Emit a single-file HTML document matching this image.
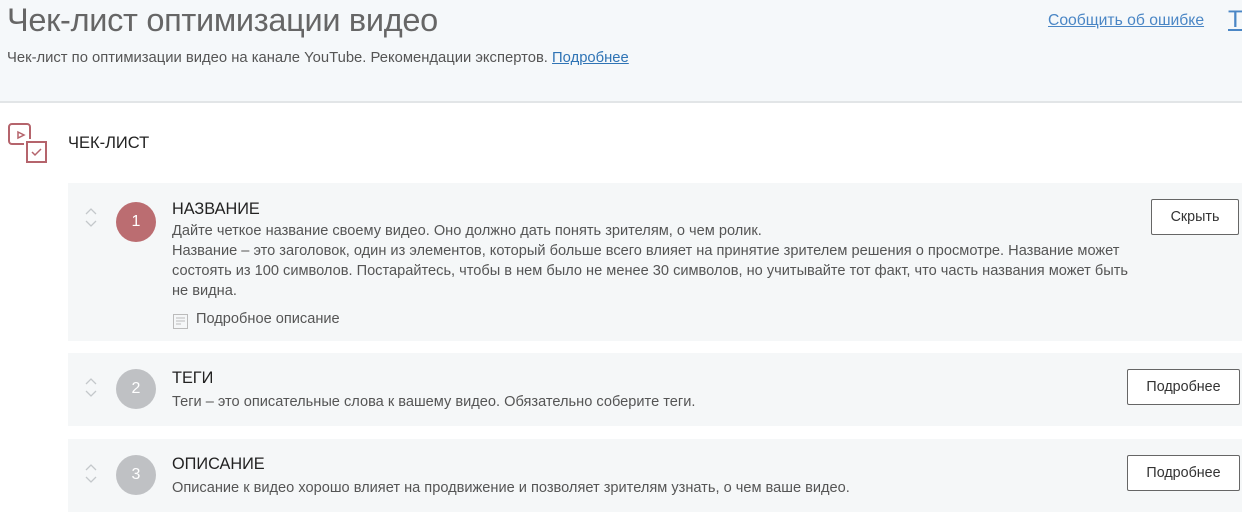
<!DOCTYPE html>
<html><head><meta charset="utf-8"><style>
*{margin:0;padding:0;box-sizing:border-box}
body{width:1242px;height:522px;overflow:hidden;background:#fff;font-family:"Liberation Sans",sans-serif;position:relative;color:#333}
.top{position:absolute;left:0;top:0;width:1242px;height:103px;background:#f5f8fa;border-bottom:2px solid #e2e5e7}
h1{position:absolute;left:7px;top:2px;font-size:32.5px;font-weight:normal;color:#666;letter-spacing:-0.3px}
.sub{position:absolute;left:7px;top:50px;font-size:14.8px;color:#555}
a{color:#2f74b5;text-decoration:underline}
.rep{position:absolute;left:1048px;top:12px;font-size:15.7px;color:#4a86c5}
.T{position:absolute;left:1228px;top:6px;font-size:24px;color:#4a86c5;text-decoration:underline}
.cl{position:absolute;left:68px;top:134px;font-size:16.5px;color:#222}
.card{position:absolute;left:68px;width:1174px;background:#f5f7f8}
.arr{position:absolute;left:16px;width:14px;height:24px}
.num{position:absolute;left:48px;width:40px;height:40px;border-radius:50%;color:#fff;font-size:16px;text-align:center;line-height:40px}
.t{position:absolute;left:104px;font-size:16.3px;color:#222}
.d{position:absolute;left:104px;font-size:14.6px;color:#555;line-height:20px;width:972px}
.btn{position:absolute;height:36px;border:1px solid #666;border-radius:2px;background:#fff;font-size:14.3px;color:#333;text-align:center;line-height:34px}
</style></head><body>
<div class="top">
<h1>Чек-лист оптимизации видео</h1>
<div class="sub">Чек-лист по оптимизации видео на канале YouTube. Рекомендации экспертов. <a>Подробнее</a></div>
<a class="rep">Сообщить об ошибке</a><a class="T">T</a>
</div>
<svg style="position:absolute;left:6px;top:122px" width="44" height="42" viewBox="0 0 44 42" fill="none" stroke="#b5646c" stroke-width="2">
<path d="M18 22H6a3 3 0 0 1-3-3V5a3 3 0 0 1 3-3h15a3 3 0 0 1 3 3v12"/>
<path d="M12 10l6 3-6 3z" stroke-width="1.5"/>
<rect x="21" y="20" width="19" height="20"/>
<path d="M26 30l3 3 6-6" stroke-width="1.5"/>
</svg>
<div class="cl">ЧЕК-ЛИСТ</div>

<div class="card" style="top:183px;height:158px">
<svg class="arr" style="top:23px" viewBox="0 0 14 24" fill="none" stroke="#c4c8cb" stroke-width="1.3"><path d="M2 8l5-5 5 5M2 15l5 5 5-5"/></svg>
<div class="num" style="top:19px;background:#bb6d71">1</div>
<div class="t" style="top:17px">НАЗВАНИЕ</div>
<div class="d" style="top:38px">Дайте четкое название своему видео. Оно должно дать понять зрителям, о чем ролик.<br>Название – это заголовок, один из элементов, который больше всего влияет на принятие зрителем решения о просмотре. Название может состоять из 100 символов. Постарайтесь, чтобы в нем было не менее 30 символов, но учитывайте тот факт, что часть названия может быть не видна.</div>
<svg style="position:absolute;left:105px;top:131px" width="15" height="15" viewBox="0 0 15 15" fill="none" stroke="#bbb"><rect x="0.5" y="0.5" width="14" height="14"/><path d="M3 4h9M3 7h9M3 10h5"/></svg>
<div class="d" style="top:126px;left:128px">Подробное описание</div>
<div class="btn" style="left:1083px;top:16px;width:88px">Скрыть</div>
</div>

<div class="card" style="top:353px;height:73px">
<svg class="arr" style="top:23px" viewBox="0 0 14 24" fill="none" stroke="#c4c8cb" stroke-width="1.3"><path d="M2 8l5-5 5 5M2 15l5 5 5-5"/></svg>
<div class="num" style="top:16px;background:#bfc1c4">2</div>
<div class="t" style="top:16px">ТЕГИ</div>
<div class="d" style="top:39px">Теги – это описательные слова к вашему видео. Обязательно соберите теги.</div>
<div class="btn" style="left:1059px;top:16px;width:113px">Подробнее</div>
</div>

<div class="card" style="top:439px;height:73px">
<svg class="arr" style="top:23px" viewBox="0 0 14 24" fill="none" stroke="#c4c8cb" stroke-width="1.3"><path d="M2 8l5-5 5 5M2 15l5 5 5-5"/></svg>
<div class="num" style="top:16px;background:#bfc1c4">3</div>
<div class="t" style="top:16px">ОПИСАНИЕ</div>
<div class="d" style="top:39px">Описание к видео хорошо влияет на продвижение и позволяет зрителям узнать, о чем ваше видео.</div>
<div class="btn" style="left:1059px;top:16px;width:113px">Подробнее</div>
</div>
</body></html>
